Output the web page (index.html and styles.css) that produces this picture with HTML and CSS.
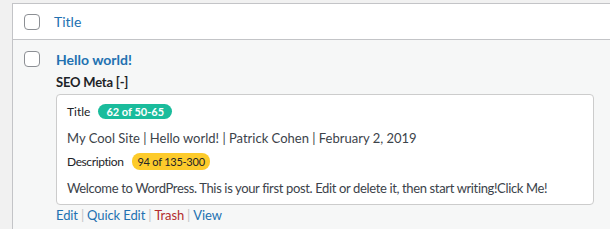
FILE: index.html
```html
<!DOCTYPE html>
<html>
<head>
<meta charset="utf-8">
<link rel="stylesheet" href="styles.css">
</head>
<body>
<div class="table">
  <div class="head">
    <span class="cb"></span>
    <a class="head-title">Title</a>
  </div>
  <div class="row">
    <span class="cb"></span>
    <div class="main">
      <a class="post-title">Hello world!</a>
      <div class="seo-label">SEO Meta [-]</div>
      <div class="box">
        <div class="line-label">Title <span class="badge green">62 of 50-65</span></div>
        <div class="line-text">My Cool Site | Hello world! | Patrick Cohen | February 2, 2019</div>
        <div class="line-label desc">Description <span class="badge yellow">94 of 135-300</span></div>
        <div class="line-text excerpt">Welcome to WordPress. This is your first post. Edit or delete it, then start writing!Click Me!</div>
      </div>
      <div class="actions">
        <a class="act">Edit</a><span class="sep">|</span><a class="act">Quick Edit</a><span class="sep">|</span><a class="act trash">Trash</a><span class="sep">|</span><a class="act">View</a>
      </div>
    </div>
  </div>
</div>
</body>
</html>
```
FILE: styles.css
```css
html, body {
  margin: 0;
  padding: 0;
}
body {
  background: #f1f1f1;
  font-family: Lato, "Noto Sans", sans-serif;
  font-size: 13px;
  color: #3c434a;
  padding: 3px 0 0 12px;
  height: 229px;
  box-sizing: border-box;
  overflow: hidden;
}
.table {
  width: 620px;
  height: 100%;
  box-sizing: border-box;
  border: 1px solid #c3c4c7;
  border-bottom: 0;
  background: #f6f7f7;
}
.head {
  height: 35px;
  background: #fff;
  border-bottom: 1px solid #c3c4c7;
  display: flex;
  align-items: center;
}
.cb {
  display: block;
  box-sizing: border-box;
  width: 16px;
  height: 16px;
  border: 1px solid #8c8f94;
  border-radius: 4px;
  background: #fff;
  flex: none;
  margin-left: 11px;
}
.head-title {
  color: #2271b1;
  font-size: 14px;
  margin-left: 14px;
}
.row {
  display: flex;
  align-items: flex-start;
  padding-top: 11px;
}
.main {
  margin-left: 16px;
  display: flex;
  flex-direction: column;
}
.post-title {
  color: #2271b1;
  font-size: 14px;
  font-weight: 700;
  line-height: 18px;
}
.seo-label {
  color: #1d2327;
  font-weight: 700;
  margin-top: 4px;
  line-height: 18px;
  letter-spacing: -0.2px;
}
.box {
  margin-top: 3px;
  width: 538px;
  box-sizing: border-box;
  background: #fff;
  border: 1px solid #ccc;
  border-radius: 4px;
  padding: 7px 10px 7px 10px;
}
.line-label {
  font-size: 12px;
  color: #1d2327;
  height: 18px;
  display: flex;
  align-items: center;
  gap: 8px;
}
.desc {
  margin-top: 5px;
  gap: 9px;
  letter-spacing: -0.4px;
}
.line-text {
  line-height: 18px;
  margin-top: 9px;
}
.excerpt {
  letter-spacing: -0.36px;
}
.badge {
  display: inline-block;
  border-radius: 8px;
  padding: 0 8px;
  line-height: 15px;
  font-size: 11px;
  font-weight: 700;
  letter-spacing: 0;
}
.green {
  background: #1abc9c;
  color: #fff;
}
.yellow {
  background: #fdcb2b;
  color: #1d2327;
  font-weight: 400;
  line-height: 17px;
  padding: 0 5px;
  letter-spacing: -0.25px;
}
.actions {
  margin-top: 1px;
  line-height: 18px;
  display: flex;
  letter-spacing: -0.1px;
}
.act {
  color: #2271b1;
}
.trash {
  color: #b32d2e;
}
.sep {
  color: #c3c4c7;
  margin: 0 3px;
}
```
